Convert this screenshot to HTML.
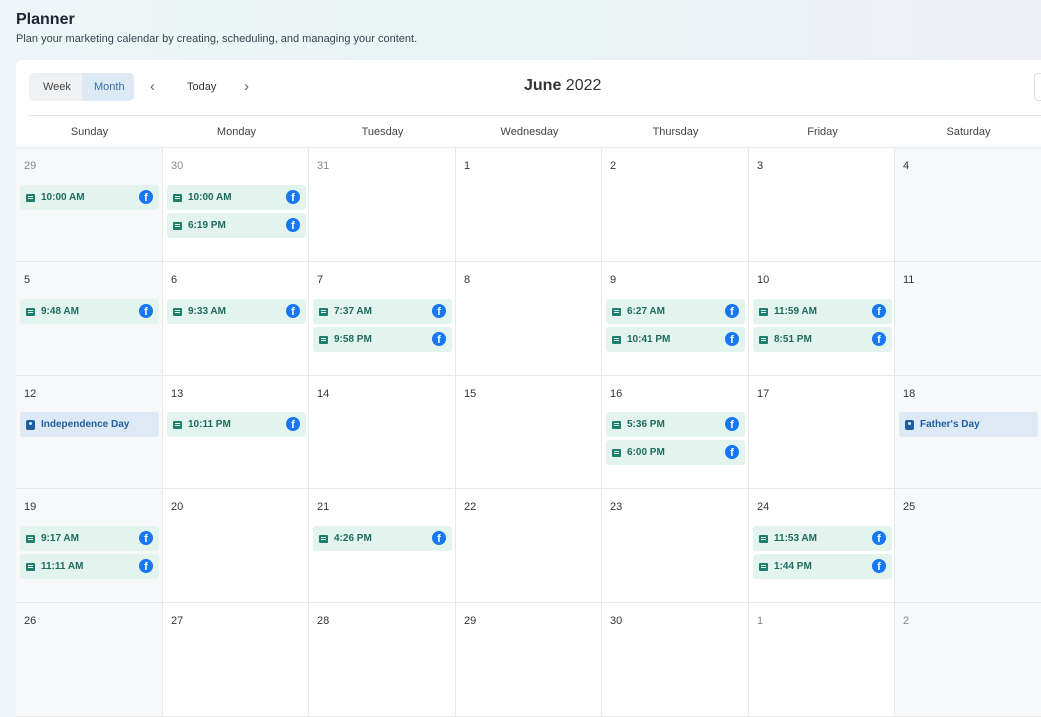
<!DOCTYPE html>
<html><head><meta charset="utf-8"><style>
*{box-sizing:border-box;margin:0;padding:0}
body{width:1041px;height:636px;overflow:hidden;font-family:"Liberation Sans",sans-serif;background:linear-gradient(90deg,#eef5f8 0%,#eaf4f4 50%,#eeeef6 100%);position:relative;color:#333}
h1{position:absolute;left:16px;top:11px;font-size:16px;font-weight:bold;color:#1d2333}
.sub{position:absolute;left:16px;top:33px;font-size:11px;color:#3a4250}
.card{position:absolute;left:16px;top:60px;width:1040px;height:600px;background:#fff;border-radius:6px 0 0 0}
.tog{position:absolute;left:29px;top:73px;width:105px;height:28px;background:#f0f1f2;border-radius:5px;font-size:11px}
.tog span{position:absolute;top:8px}
.mon{position:absolute;left:53px;top:0;width:52px;height:28px;background:#dde9f5;border-radius:0 5px 5px 0;color:#3b6fa8;padding:8px 0 0 12px}
.nav{position:absolute;top:78px;font-size:15px;color:#666}
.t{position:absolute;font-size:11px;color:#333}
.title{position:absolute;left:524px;top:77px;font-size:16px;color:#333}
.hl{position:absolute;left:28px;top:115px;width:1013px;height:1px;background:#e6e6e6}
.dh{position:absolute;top:116px;height:32px;width:147px;text-align:center;font-size:11px;color:#444;line-height:32px}
.shadow{position:absolute;left:16px;top:147px;width:1025px;height:2px;background:linear-gradient(#e0e4e8,transparent)}
.c{position:absolute;width:147px;height:114px;border-right:1px solid #e8e8e8;border-bottom:1px solid #e8e8e8;background:#fff}
.c.g{background:#f6f8fa}
.c b{position:absolute;left:8px;top:12px;font-size:11px;font-weight:normal;color:#333}
.c.o b{color:#888}
.ev{position:absolute;left:4px;width:139px;height:25px;background:#e3f3ee;border-radius:3px;font-size:10px;font-weight:bold;color:#1d6b5f}
.ev i{position:absolute;left:6px;top:9px;width:9px;height:8px;background:#1e7f6e;border-radius:1px}
.ev i:after{content:"";position:absolute;left:2px;top:2px;width:5px;height:1px;background:#e3f3ee;box-shadow:0 2px 0 #e3f3ee}
.ev span{position:absolute;left:21px;top:7px}
.fb{position:absolute;left:119px;top:5px;width:14px;height:14px;border-radius:50%;background:#1877f2;color:#fff;font-size:11px;font-weight:bold;text-align:center;line-height:16px;overflow:hidden}
.h{background:#dde9f5;color:#1e5fa0}
.h i{background:#1e5fa0;border-radius:2px;width:9px;height:10px;top:8px}
.h i:after{background:#dde9f5;box-shadow:none;left:3px;top:2px;width:3px;height:3px;border-radius:50%}
</style></head><body>
<h1>Planner</h1>
<div class="sub">Plan your marketing calendar by creating, scheduling, and managing your content.</div>
<div class="card"></div>
<div class="tog"><span style="left:14px;color:#444">Week</span><div class="mon">Month</div></div>
<div class="nav" style="left:150px">&#8249;</div>
<div class="t" style="left:187px;top:81px">Today</div>
<div class="nav" style="left:244px">&#8250;</div>
<div class="title"><b>June</b> 2022</div>
<div style="position:absolute;left:1034px;top:73px;width:10px;height:28px;border:1px solid #ddd;border-radius:4px"></div>
<div class="hl"></div>
<div class="dh" style="left:16px">Sunday</div><div class="dh" style="left:163px">Monday</div><div class="dh" style="left:309px">Tuesday</div><div class="dh" style="left:456px">Wednesday</div><div class="dh" style="left:602px">Thursday</div><div class="dh" style="left:749px">Friday</div><div class="dh" style="left:895px">Saturday</div>

<!-- row 0 -->
<div class="c g o" style="left:16px;top:148px"><b>29</b><div class="ev" style="top:37px"><i></i><span>10:00 AM</span><div class="fb">f</div></div></div>
<div class="c o" style="left:163px;top:148px;width:146px"><b>30</b><div class="ev" style="top:37px"><i></i><span>10:00 AM</span><div class="fb">f</div></div><div class="ev" style="top:65px"><i></i><span>6:19 PM</span><div class="fb">f</div></div></div>
<div class="c o" style="left:309px;top:148px"><b>31</b></div>
<div class="c" style="left:456px;top:148px;width:146px"><b>1</b></div>
<div class="c" style="left:602px;top:148px"><b>2</b></div>
<div class="c" style="left:749px;top:148px;width:146px"><b>3</b></div>
<div class="c g" style="left:895px;top:148px;width:150px"><b>4</b></div>
<!-- row 1 -->
<div class="c g" style="left:16px;top:262px"><b>5</b><div class="ev" style="top:37px"><i></i><span>9:48 AM</span><div class="fb">f</div></div></div>
<div class="c" style="left:163px;top:262px;width:146px"><b>6</b><div class="ev" style="top:37px"><i></i><span>9:33 AM</span><div class="fb">f</div></div></div>
<div class="c" style="left:309px;top:262px"><b>7</b><div class="ev" style="top:37px"><i></i><span>7:37 AM</span><div class="fb">f</div></div><div class="ev" style="top:65px"><i></i><span>9:58 PM</span><div class="fb">f</div></div></div>
<div class="c" style="left:456px;top:262px;width:146px"><b>8</b></div>
<div class="c" style="left:602px;top:262px"><b>9</b><div class="ev" style="top:37px"><i></i><span>6:27 AM</span><div class="fb">f</div></div><div class="ev" style="top:65px"><i></i><span>10:41 PM</span><div class="fb">f</div></div></div>
<div class="c" style="left:749px;top:262px;width:146px"><b>10</b><div class="ev" style="top:37px"><i></i><span>11:59 AM</span><div class="fb">f</div></div><div class="ev" style="top:65px"><i></i><span>8:51 PM</span><div class="fb">f</div></div></div>
<div class="c g" style="left:895px;top:262px;width:150px"><b>11</b></div>
<!-- row 2 -->
<div class="c g" style="left:16px;top:376px;height:113px"><b>12</b><div class="ev h" style="top:36px"><i></i><span>Independence Day</span></div></div>
<div class="c" style="left:163px;top:376px;width:146px;height:113px"><b>13</b><div class="ev" style="top:36px"><i></i><span>10:11 PM</span><div class="fb">f</div></div></div>
<div class="c" style="left:309px;top:376px;height:113px"><b>14</b></div>
<div class="c" style="left:456px;top:376px;width:146px;height:113px"><b>15</b></div>
<div class="c" style="left:602px;top:376px;height:113px"><b>16</b><div class="ev" style="top:36px"><i></i><span>5:36 PM</span><div class="fb">f</div></div><div class="ev" style="top:64px"><i></i><span>6:00 PM</span><div class="fb">f</div></div></div>
<div class="c" style="left:749px;top:376px;width:146px;height:113px"><b>17</b></div>
<div class="c g" style="left:895px;top:376px;width:150px;height:113px"><b>18</b><div class="ev h" style="top:36px"><i></i><span>Father's Day</span></div></div>
<!-- row 3 -->
<div class="c g" style="left:16px;top:489px"><b>19</b><div class="ev" style="top:37px"><i></i><span>9:17 AM</span><div class="fb">f</div></div><div class="ev" style="top:65px"><i></i><span>11:11 AM</span><div class="fb">f</div></div></div>
<div class="c" style="left:163px;top:489px;width:146px"><b>20</b></div>
<div class="c" style="left:309px;top:489px"><b>21</b><div class="ev" style="top:37px"><i></i><span>4:26 PM</span><div class="fb">f</div></div></div>
<div class="c" style="left:456px;top:489px;width:146px"><b>22</b></div>
<div class="c" style="left:602px;top:489px"><b>23</b></div>
<div class="c" style="left:749px;top:489px;width:146px"><b>24</b><div class="ev" style="top:37px"><i></i><span>11:53 AM</span><div class="fb">f</div></div><div class="ev" style="top:65px"><i></i><span>1:44 PM</span><div class="fb">f</div></div></div>
<div class="c g" style="left:895px;top:489px;width:150px"><b>25</b></div>
<!-- row 4 -->
<div class="c g" style="left:16px;top:603px"><b>26</b></div>
<div class="c" style="left:163px;top:603px;width:146px"><b>27</b></div>
<div class="c" style="left:309px;top:603px"><b>28</b></div>
<div class="c" style="left:456px;top:603px;width:146px"><b>29</b></div>
<div class="c" style="left:602px;top:603px"><b>30</b></div>
<div class="c o" style="left:749px;top:603px;width:146px"><b>1</b></div>
<div class="c g o" style="left:895px;top:603px;width:150px"><b>2</b></div>
<div class="shadow"></div>
</body></html>
